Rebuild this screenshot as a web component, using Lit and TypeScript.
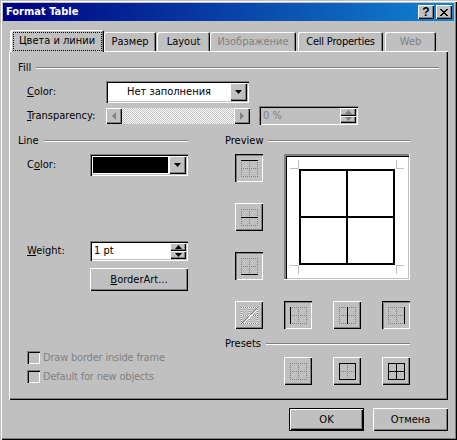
import { LitElement, html, css, svg } from "lit";
import { customElement } from "lit/decorators.js";

const TABS = [
  { label: "Цвета и линии", w: 94, x: 0, sel: true },
  { label: "Размер", w: 52, x: 0 },
  { label: "Layout", w: 53, x: 1 },
  { label: "Изображение", w: 86, x: 0, off: true },
  { label: "Cell Properties", w: 85, x: 2, tight: true },
  { label: "Web", w: 51, x: 2, off: true },
];

// 17x17 border glyph: dotted grid plus the solid lines named in `solid`
function glyph(solid: string[], diag = false) {
  const dots = [
    "M0 0.5H17", "M0 8.5H17", "M0 16.5H17",
    "M0.5 0V17", "M8.5 0V17", "M16.5 0V17",
  ];
  const lines: Record<string, string> = {
    t: "M0 0.5H17", m: "M0 8.5H17", b: "M0 16.5H17",
    l: "M0.5 0V17", c: "M8.5 0V17", r: "M16.5 0V17",
  };
  return html`<svg class="glyph" width="17" height="17" viewBox="0 0 17 17" shape-rendering="crispEdges">
    ${diag ? dots.map((d) => svg`<path d=${d} stroke="#fff" stroke-dasharray="1 1" stroke-dashoffset="1" fill="none"/>`) : ""}
    ${dots.map((d) => svg`<path d=${d} stroke="#808080" stroke-dasharray="1 1" fill="none"/>`)}
    ${diag ? svg`<path d="M3 16L16 3" stroke="#fff" fill="none"/><path d="M1 16L16 1" stroke="#808080" fill="none"/>` : ""}
    ${solid.map((k) => svg`<path d=${lines[k]} stroke="#000" fill="none"/>`)}
  </svg>`;
}

const up = html`<svg width="7" height="4" viewBox="0 0 7 4"><path d="M3.5 0L7 4H0Z" fill="currentColor"/></svg>`;
const down = html`<svg width="7" height="4" viewBox="0 0 7 4"><path d="M0 0H7L3.5 4Z" fill="currentColor"/></svg>`;
const comboBtn = html`<span class="raised arrow">${down}</span>`;

@customElement("app-root")
export class AppRoot extends LitElement {
  static styles = css`
    :host { display: block; width: 457px; height: 440px; overflow: hidden; }
    * { box-sizing: border-box; }
    .window {
      width: 457px; height: 440px; background: #c0c0c0; padding: 3px 0 0 0;
      font: 11px/14px "DejaVu Sans Condensed", "DejaVu Sans", sans-serif; font-stretch: condensed; color: #000;
      box-shadow: inset 1px 1px 0 #c0c0c0, inset 2px 2px 0 #fff, inset -1px -1px 0 #000, inset -2px -2px 0 #808080;
    }
    u { text-decoration: underline; text-underline-offset: 1px; }
    .raised {
      background: #c0c0c0;
      box-shadow: inset 1px 1px 0 #fff, inset -1px -1px 0 #000, inset -2px -2px 0 #808080;
    }
    .sunken {
      box-shadow: inset 1px 1px 0 #808080, inset 2px 2px 0 #000, inset -1px -1px 0 #fff, inset -2px -2px 0 #c0c0c0;
    }
    .title {
      margin: 0 3px; height: 18px; padding: 0 2px 0 3px; display: flex; align-items: center; gap: 2px;
      background: linear-gradient(90deg, #000080, #1084d0);
      color: #fff; font: bold 11px/18px "DejaVu Sans Condensed", "DejaVu Sans", sans-serif; font-stretch: condensed;
    }
    .title span.text { flex: 1; }
    .cap { width: 16px; height: 14px; display: flex; align-items: center; justify-content: center; color: #000; }
    .cap.help { font: bold 12px/14px "Liberation Sans", sans-serif; }
    .tabs { display: flex; align-items: flex-end; height: 22px; margin: 8px 0 0 10px; position: relative; z-index: 1; }
    .tab {
      height: 19px; display: flex; align-items: center; justify-content: center; white-space: nowrap;
      border-radius: 2px 2px 0 0; padding-top: 1px;
      box-shadow: inset 1px 1px 0 #fff, inset -1px 0 0 #000, inset -2px 0 0 #808080;
    }
    .tab.tight { letter-spacing: -0.2px; }
    .tab.sel {
      height: 22px; background: #c0c0c0; margin-bottom: -1px;
      box-shadow: inset 2px 1px 0 #fff, inset -1px 0 0 #000, inset -2px 0 0 #808080;
    }
    .focus { outline: 1px dotted #000; outline-offset: 0; padding: 1px 4px; width: 87px; height: 17px; display: flex; align-items: center; justify-content: center; margin-top: -1px; }
    .off { color: #808080; }
    .panel {
      margin-left: 9px; width: 439px; height: 349px; padding: 10px 9px 0 9px;
      box-shadow: inset 1px 1px 0 #fff, inset -1px -1px 0 #000, inset -2px -2px 0 #808080;
    }
    .head { display: flex; align-items: center; gap: 5px; height: 14px; }
    .head i {
      flex: 1; height: 2px; margin-top: -1px;
      border-top: 1px solid #808080; border-bottom: 1px solid #fff;
    }
    .row { display: grid; align-items: center; padding-left: 9px; }
    .fill-color { grid-template-columns: 79px 143px; margin-top: 6px; height: 22px; }
    .fill-trans { grid-template-columns: 79px 144px 108px; margin-top: 3px; height: 19px; }
    .fill-trans .spin { margin-left: 9px; }
    .combo { height: 22px; background: #fff; display: flex; padding: 2px; position: relative; }
    .combo .val { flex: 1; display: flex; align-items: center; padding-left: 19px; }
    .arrow { width: 17px; display: flex; align-items: center; justify-content: center; flex: none; color: #000; }
    .scroll { height: 16px; display: flex; justify-content: space-between; background: repeating-conic-gradient(#fff 0 25%, #c0c0c0 0 50%) 0 0 / 2px 2px; }
    .scroll .raised { width: 16px; height: 16px; display: flex; align-items: center; justify-content: center; color: #808080; }
    .tri-l { width: 0; height: 0; border: 4px solid transparent; border-right-color: #808080; border-left: 0; }
    .tri-r { width: 0; height: 0; border: 4px solid transparent; border-left-color: #808080; border-right: 0; }
    .spin { height: 19px; display: flex; padding: 2px; align-items: stretch; }
    .spin.on { background: #fff; height: 20px; }
    .spin .val { flex: 1; display: flex; align-items: center; padding-left: 2px; }
    .spin .btns { width: 16px; display: grid; grid-template-rows: 1fr 1fr; }
    .spin .btns span { display: flex; align-items: center; justify-content: center; }
    .spin.off .btns span { color: #808080; }
    .columns { display: grid; grid-template-columns: 170px 185px; column-gap: 37px; margin-top: 9px; }
    .line-color { grid-template-columns: 63px 98px; margin-top: 6px; height: 22px; }
    .swatch { flex: 1; background: #000; margin: 1px; }
    .weight { grid-template-columns: 63px 98px; margin-top: 65px; height: 20px; }
    .art { display: flex; align-items: center; justify-content: center; width: 98px; height: 23px; margin: 7px 0 0 72px; }
    .checks { margin: 60px 0 0 9px; display: grid; row-gap: 6px; }
    .check { display: flex; align-items: center; gap: 3px; height: 13px; color: #808080; letter-spacing: -0.2px; }
    .box { width: 13px; height: 13px; flex: none; }
    .grid { display: grid; grid-template-columns: repeat(4, 28px); grid-auto-rows: 28px; gap: 21px; margin: 6px 0 0 10px; }
    .tool { width: 28px; height: 28px; display: flex; align-items: center; justify-content: center; }
    .tool.down { box-shadow: inset 1px 1px 0 #000, inset 2px 2px 0 #808080, inset -1px -1px 0 #fff; }
    .tool .glyph { display: block; }
    .preview { grid-column: 2 / span 3; grid-row: 1 / span 3; background: #fff; }
    .preview svg { display: block; }
    .presets { margin-top: 8px; }
    .skip { grid-column: 2; }
    .foot { display: flex; justify-content: flex-end; gap: 9px; margin-top: 8px; padding-right: 9px; }
    .foot .raised { width: 75px; height: 23px; display: flex; align-items: center; justify-content: center; }
    .foot .ok { box-shadow: inset 0 0 0 1px #000, inset 2px 2px 0 #fff, inset -2px -2px 0 #000, inset -3px -3px 0 #808080; }
  `;

  render() {
    return html`<div class="window">
      <div class="title">
        <span class="text">Format Table</span>
        <span class="raised cap help">?</span>
        <span class="raised cap"><svg width="8" height="7" viewBox="0 0 8 7" shape-rendering="crispEdges"><path d="M0 0h2v1h1v1h2V1h1V0h2v1H7v1H6v1H5v1h1v1h1v1h1v1H6V6H5V5H3v1H2v1H0V6h1V5h1V4h1V3H2V2H1V1H0Z" fill="#000"/></svg></span>
      </div>
      <div class="tabs">
        ${TABS.map((t) => html`<div class="tab ${t.sel ? "sel" : ""} ${t.off ? "off" : ""} ${t.tight ? "tight" : ""}" style="width:${t.w}px;margin-left:${t.x}px">
          ${t.sel ? html`<span class="focus">${t.label}</span>` : t.label}
        </div>`)}
      </div>
      <div class="panel">
        <div class="head"><span>Fill</span><i></i></div>
        <div class="row fill-color">
          <label><u>C</u>olor:</label>
          <div class="combo sunken"><span class="val">Нет заполнения</span>${comboBtn}</div>
        </div>
        <div class="row fill-trans">
          <label><u>T</u>ransparency:</label>
          <div class="scroll"><span class="raised"><span class="tri-l"></span></span><span class="raised"><span class="tri-r"></span></span></div>
          <div class="spin off sunken"><span class="val off">0 %</span><span class="btns"><span class="raised">${up}</span><span class="raised">${down}</span></span></div>
        </div>
        <div class="columns">
          <div>
            <div class="head"><span>Line</span><i></i></div>
            <div class="row line-color">
              <label>C<u>o</u>lor:</label>
              <div class="combo sunken"><span class="swatch"></span>${comboBtn}</div>
            </div>
            <div class="row weight">
              <label><u>W</u>eight:</label>
              <div class="spin on sunken"><span class="val">1 pt</span><span class="btns"><span class="raised">${up}</span><span class="raised">${down}</span></span></div>
            </div>
            <div class="raised art"><span><u>B</u>orderArt...</span></div>
            <div class="checks">
              <div class="check"><span class="box sunken"></span>Draw border inside frame</div>
              <div class="check"><span class="box sunken"></span>Default for new objects</div>
            </div>
          </div>
          <div>
            <div class="head"><span>Preview</span><i></i></div>
            <div class="grid">
              <span class="tool raised down">${glyph(["t"])}</span>
              <div class="preview sunken">
                <svg width="126" height="126" viewBox="0 0 126 126" shape-rendering="crispEdges">
                  <path d="M1 1.5H125M1.5 1V125" stroke="#808080" fill="none"/>
                  <path d="M2 2.5H125M2.5 2V125" stroke="#000" fill="none"/>
                  <path d="M125.5 0V126M0 125.5H126" stroke="#fff" fill="none"/>
                  <path d="M6 14.5H14.5V6M112 6V14.5H120M6 111.5H14.5V120M112 120V111.5H120" stroke="#c0c0c0" fill="none"/>
                  <path d="M16 16H110V110H16ZM63 16V110M16 63H110" stroke="#000" stroke-width="2" fill="none"/>
                </svg>
              </div>
              <span class="tool raised">${glyph(["m"])}</span>
              <span class="tool raised down">${glyph(["b"])}</span>
              <span class="tool raised">${glyph([], true)}</span>
              <span class="tool raised down">${glyph(["l"])}</span>
              <span class="tool raised">${glyph(["c"])}</span>
              <span class="tool raised down">${glyph(["r"])}</span>
            </div>
            <div class="head presets"><span>Presets</span><i></i></div>
            <div class="grid">
              <span class="tool raised skip">${glyph([])}</span>
              <span class="tool raised">${glyph(["t", "b", "l", "r"])}</span>
              <span class="tool raised">${glyph(["t", "m", "b", "l", "c", "r"])}</span>
            </div>
          </div>
        </div>
      </div>
      <div class="foot">
        <div class="raised ok">OK</div>
        <div class="raised">Отмена</div>
      </div>
    </div>`;
  }
}
